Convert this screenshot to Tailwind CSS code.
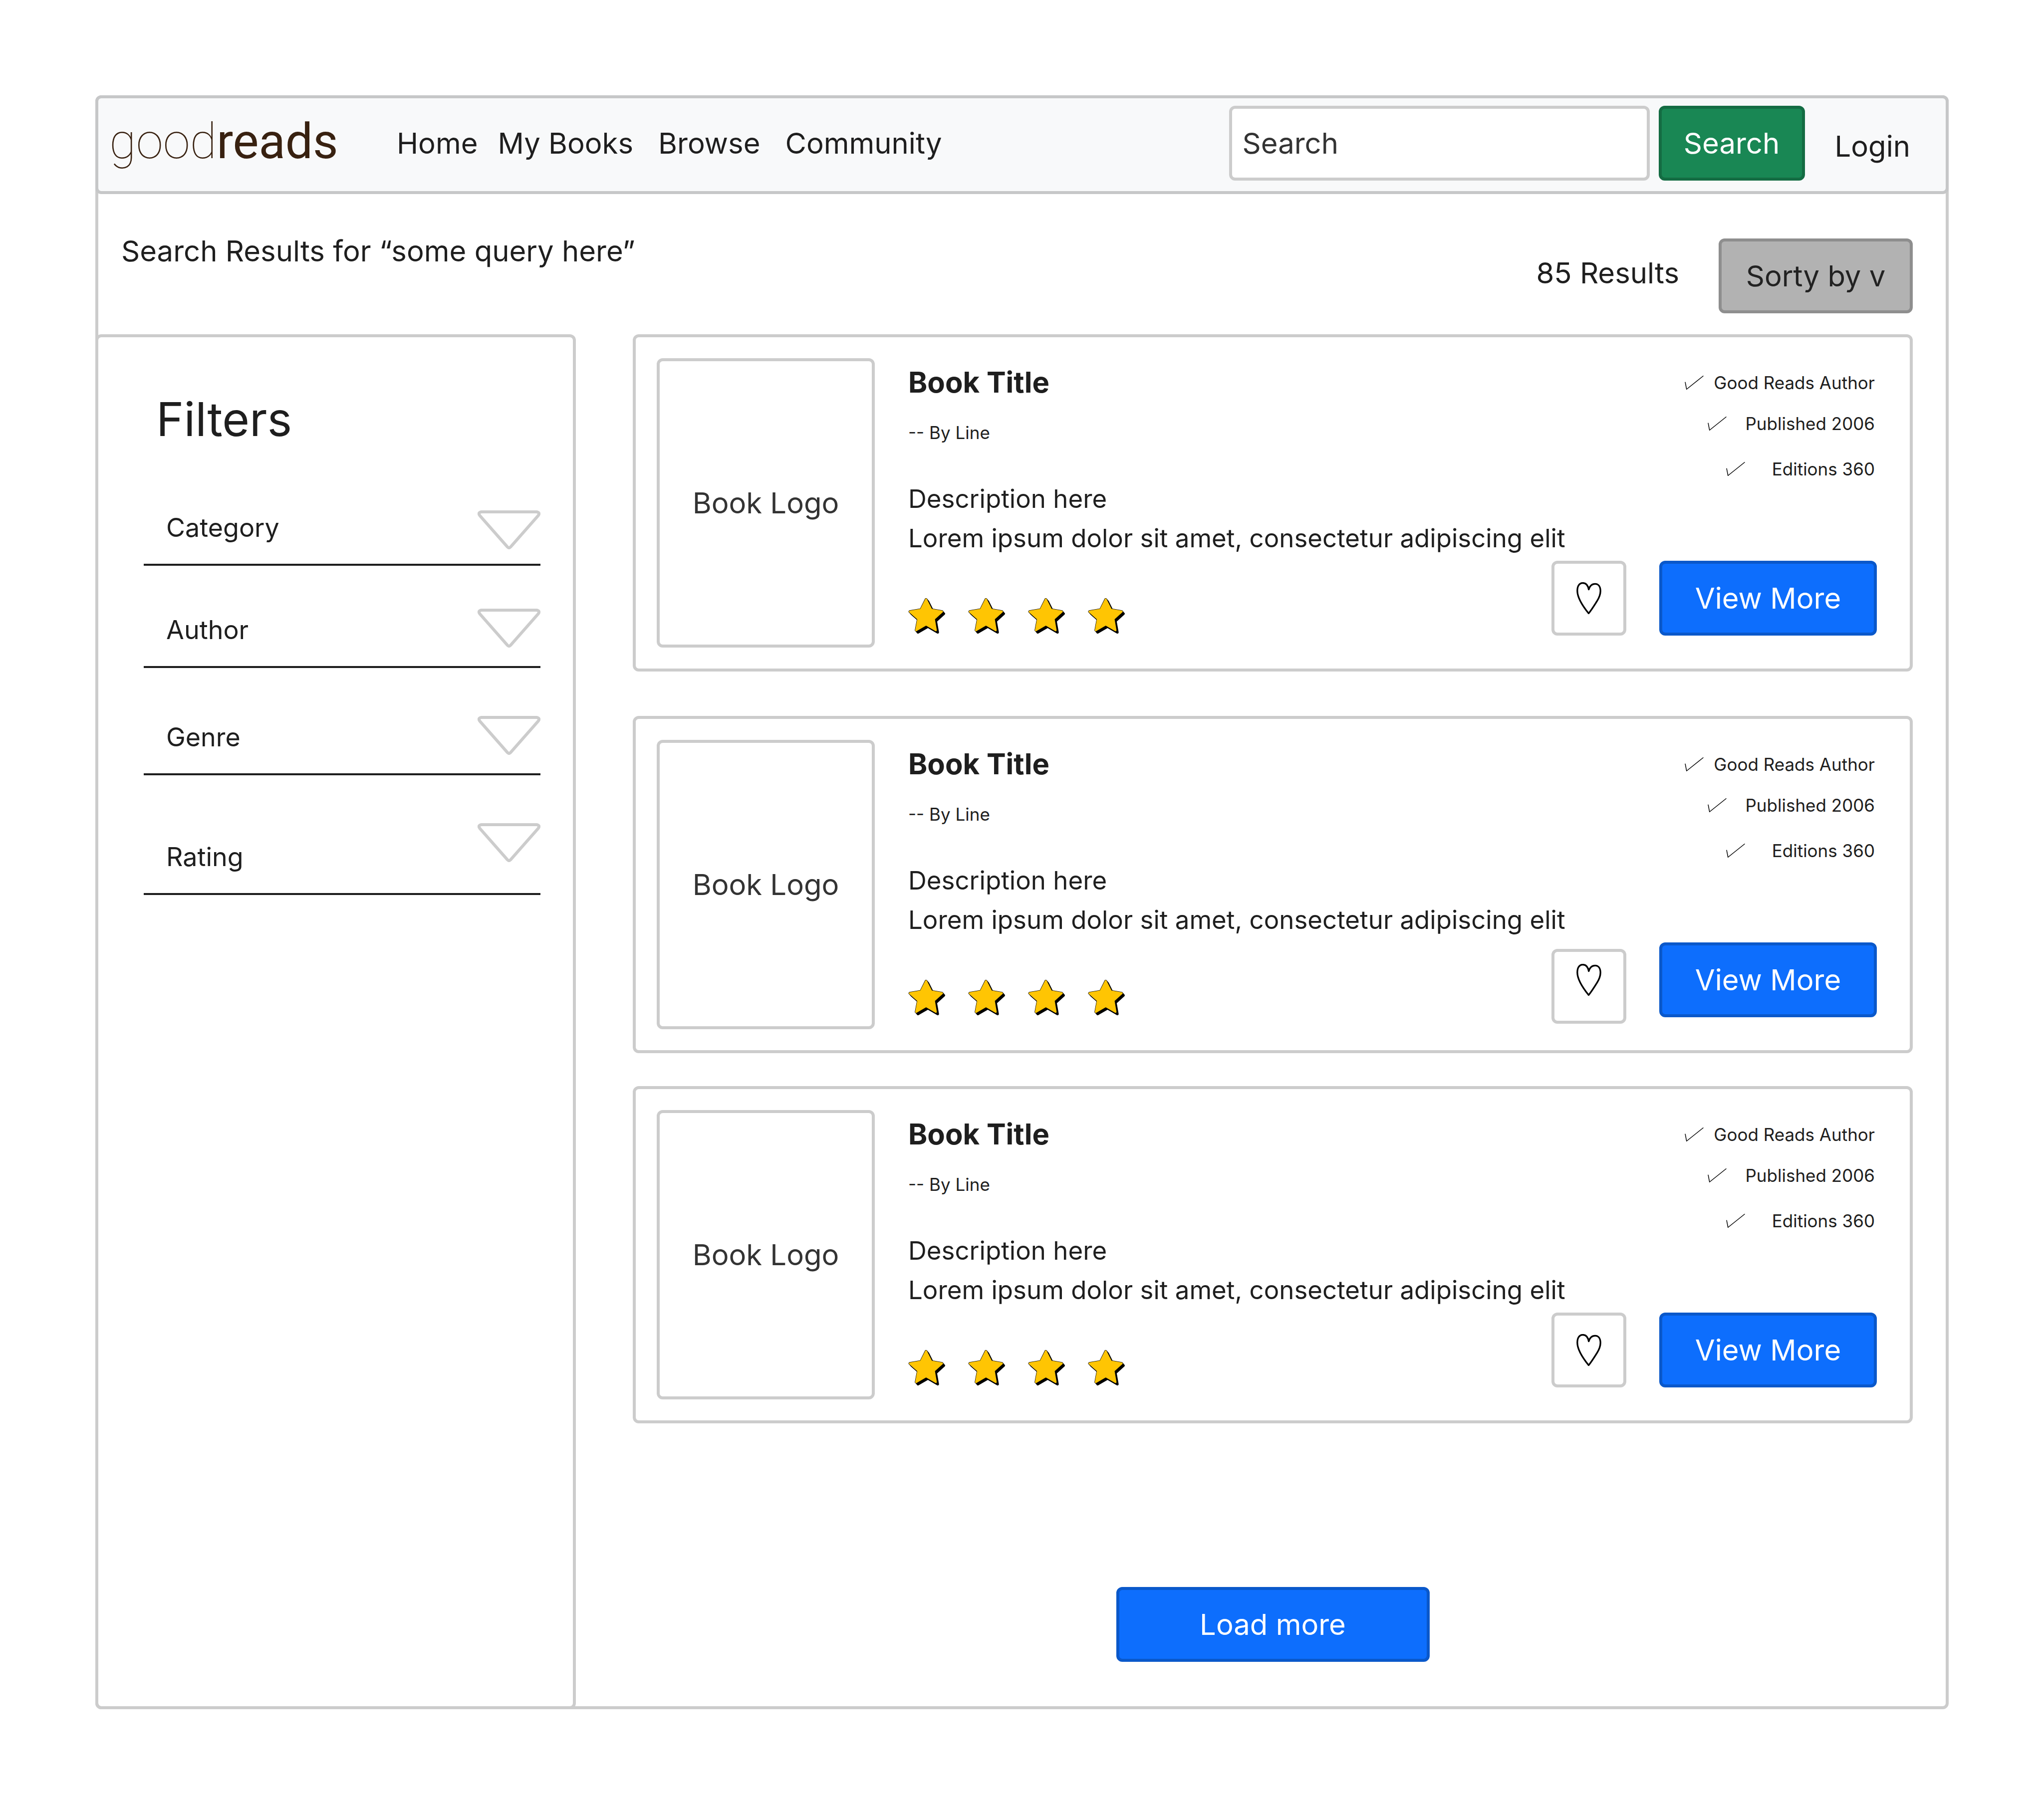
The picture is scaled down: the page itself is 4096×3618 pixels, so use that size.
<!DOCTYPE html>
<html lang="en">
<head>
<meta charset="utf-8">
<title>Goodreads search results</title>
<script src="https://cdn.jsdelivr.net/npm/@tailwindcss/browser@4"></script>
</head>
<body class="bg-white font-['Inter',sans-serif] text-[58px] leading-[73px] text-[#1e1e1e]">

<!-- Shared icons -->
<svg class="hidden" aria-hidden="true">
  <symbol id="star" viewBox="48 42 300 288">
    <g stroke-linejoin="round">
      <path transform="translate(15 17)" fill="#000" stroke="#000" stroke-width="20" d="M191 52L233 136L321 151L255 211L271 303L191 257L110 303L127 211L59 151L149 136Z"/>
      <path transform="translate(8 9)" fill="#000" stroke="#000" stroke-width="20" d="M191 52L233 136L321 151L255 211L271 303L191 257L110 303L127 211L59 151L149 136Z"/>
      <path fill="#000" stroke="#000" stroke-width="21" d="M191 52L233 136L321 151L255 211L271 303L191 257L110 303L127 211L59 151L149 136Z"/>
      <path fill="#ffc503" stroke="#ffc503" stroke-width="15" d="M191 52L233 136L321 151L255 211L271 303L191 257L110 303L127 211L59 151L149 136Z"/>
    </g>
  </symbol>
  <symbol id="check" viewBox="78 53 152 114">
    <path fill="none" stroke="#000" stroke-width="6" stroke-linecap="round" stroke-linejoin="round" d="M81 107L92 164L227 56"/>
  </symbol>
  <symbol id="heart" viewBox="258 260 198 254">
    <path fill="none" stroke="#000" stroke-width="13" stroke-linejoin="round" stroke-linecap="round" d="M355 508C310 452 265 385 265 328C265 288 283 266 309 266C333 266 350 286 356 318C364 290 382 273 406 273C432 273 449 294 449 330C449 358 438 384 421 411C400 444 378 480 355 508Z"/>
  </symbol>
  <symbol id="caret" viewBox="0 0 168 104">
    <path fill="#fff" stroke="#ccc" stroke-width="8" stroke-linejoin="round" d="M10 4H158Q168 6 162 14L88 98Q84 102 80 98L6 14Q0 6 10 4Z"/>
  </symbol>
</svg>

<div class="min-h-screen p-[191px]">
  <div class="rounded-[12px] border-[6px] border-[#ccc] bg-white">

    <header class="-mx-[6px] -mt-[6px] flex items-center rounded-[12px] border-[6px] border-[#c6c7c8] bg-[#f8f9fa] pt-[15px] pr-[71px] pb-[21px] pl-[22px]">
      <a href="#" class="w-[576px] pb-1.5 font-['Roboto',sans-serif] text-[98px] leading-[120px] text-[#382110]"><span class="font-thin">good</span><span>reads</span></a>
      <nav class="flex gap-10">
        <a href="#">Home</a>
        <a href="#">My Books</a>
        <a href="#" class="pl-2.5">Browse</a>
        <a href="#" class="pl-2.5">Community</a>
      </nav>
      <form class="ml-auto flex gap-[18px]">
        <input type="search" aria-label="Search" placeholder="Search" class="h-[150px] w-[843px] rounded-[12px] border-[6px] border-[#ccc] bg-white px-[21px] placeholder:text-[#333]">
        <button type="button" class="h-[150px] w-[293px] rounded-[12px] border-[6px] border-[#146c43] bg-[#198754] text-white">Search</button>
      </form>
      <a href="#" class="ml-[60px] pt-3">Login</a>
    </header>

    <div class="flex items-start justify-between pt-[78px] pr-[66px] pb-[42px] pl-[46px]">
      <h1>Search Results for “some query here”</h1>
      <div class="mt-[11px] flex items-center gap-[79px]">
        <p class="pb-3">85 Results</p>
        <button type="button" class="h-[150px] w-[389px] rounded-[12px] border-[6px] border-[#8e8e8e] bg-[#b2b2b2] text-[#222]">Sorty by v</button>
      </div>
    </div>

    <div class="flex">
      <aside class="-mb-[6px] -ml-[6px] w-[963px] shrink-0 rounded-[12px] border-[6px] border-[#ccc] pt-[106px] pr-[65px] pl-[91px]">
        <h2 class="pl-[25px] text-[94px] leading-[116px]">Filters</h2>
        <div class="mt-[125px] flex flex-col text-[52px] leading-[64px]">
          <button type="button" class="flex h-[111px] justify-between border-b-4 border-[#1e1e1e] pl-[45px]">
            <span class="self-end pb-10">Category</span>
            <svg class="h-[78px] w-[126px]"><use href="#caret"/></svg>
          </button>
          <button type="button" class="mt-[86px] flex h-[119px] justify-between border-b-4 border-[#1e1e1e] pl-[45px]">
            <span class="self-end pb-10">Author</span>
            <svg class="h-[78px] w-[126px]"><use href="#caret"/></svg>
          </button>
          <button type="button" class="mt-24 flex h-[119px] justify-between border-b-4 border-[#1e1e1e] pl-[45px]">
            <span class="self-end pb-10">Genre</span>
            <svg class="h-[78px] w-[126px]"><use href="#caret"/></svg>
          </button>
          <button type="button" class="mt-24 flex h-[144px] justify-between border-b-4 border-[#1e1e1e] pl-[45px]">
            <span class="self-end pb-10">Rating</span>
            <svg class="h-[78px] w-[126px]"><use href="#caret"/></svg>
          </button>
        </div>
      </aside>

      <main class="flex grow flex-col pr-[66px] pb-[89px] pl-[114px]">

        <article class="flex gap-[67px] rounded-[12px] border-[6px] border-[#ccc] py-[42px] pr-[66px] pl-[42px]">
          <div class="flex h-[580px] w-[437px] shrink-0 items-center justify-center rounded-[12px] border-[6px] border-[#ccc] text-[#333]">Book Logo</div>
          <div class="grow">
            <div class="flex justify-between">
              <div class="pt-3">
                <h3 class="font-bold">Book Title</h3>
                <p class="mt-[42px] text-[35px] leading-[44px]">-- By Line</p>
                <p class="mt-[71px] text-[51px] leading-[79px]">Description here<br>Lorem ipsum dolor sit amet, consectetur adipiscing elit</p>
              </div>
              <ul class="flex flex-col items-end pt-[27px] pr-1 text-[35px] leading-[44px]">
                <li class="flex items-center gap-5"><svg class="h-[28px] w-[38px]"><use href="#check"/></svg>Good Reads Author</li>
                <li class="mt-[38px] flex items-center gap-[38px]"><svg class="h-[28px] w-[38px]"><use href="#check"/></svg>Published 2006</li>
                <li class="mt-[47px] flex items-center gap-[54px]"><svg class="h-[28px] w-[38px]"><use href="#check"/></svg>Editions 360</li>
              </ul>
            </div>
            <div class="mt-[6px] flex h-[150px] items-start justify-between">
              <div class="mt-[75px] flex gap-[45px]" role="img" aria-label="4 stars">
                <svg class="h-[71px] w-[75px]"><use href="#star"/></svg>
                <svg class="h-[71px] w-[75px]"><use href="#star"/></svg>
                <svg class="h-[71px] w-[75px]"><use href="#star"/></svg>
                <svg class="h-[71px] w-[75px]"><use href="#star"/></svg>
              </div>
              <div class="flex items-start gap-[66px]">
                <button type="button" aria-label="Add to favorites" class="flex h-[150px] w-[150px] items-center justify-center rounded-[12px] border-[6px] border-[#ccc]"><svg class="h-[64px] w-[50px]"><use href="#heart"/></svg></button>
                <button type="button" class="h-[150px] w-[436px] rounded-[12px] border-[6px] border-[#0a58ca] bg-[#0d6efd] text-white">View More</button>
              </div>
            </div>
          </div>
        </article>

        <article class="mt-[89px] flex gap-[67px] rounded-[12px] border-[6px] border-[#ccc] py-[42px] pr-[66px] pl-[42px]">
          <div class="flex h-[580px] w-[437px] shrink-0 items-center justify-center rounded-[12px] border-[6px] border-[#ccc] text-[#333]">Book Logo</div>
          <div class="grow">
            <div class="flex justify-between">
              <div class="pt-3">
                <h3 class="font-bold">Book Title</h3>
                <p class="mt-[42px] text-[35px] leading-[44px]">-- By Line</p>
                <p class="mt-[71px] text-[51px] leading-[79px]">Description here<br>Lorem ipsum dolor sit amet, consectetur adipiscing elit</p>
              </div>
              <ul class="flex flex-col items-end pt-[27px] pr-1 text-[35px] leading-[44px]">
                <li class="flex items-center gap-5"><svg class="h-[28px] w-[38px]"><use href="#check"/></svg>Good Reads Author</li>
                <li class="mt-[38px] flex items-center gap-[38px]"><svg class="h-[28px] w-[38px]"><use href="#check"/></svg>Published 2006</li>
                <li class="mt-[47px] flex items-center gap-[54px]"><svg class="h-[28px] w-[38px]"><use href="#check"/></svg>Editions 360</li>
              </ul>
            </div>
            <div class="mt-[6px] flex h-[150px] items-start justify-between">
              <div class="mt-[75px] flex gap-[45px]" role="img" aria-label="4 stars">
                <svg class="h-[71px] w-[75px]"><use href="#star"/></svg>
                <svg class="h-[71px] w-[75px]"><use href="#star"/></svg>
                <svg class="h-[71px] w-[75px]"><use href="#star"/></svg>
                <svg class="h-[71px] w-[75px]"><use href="#star"/></svg>
              </div>
              <div class="flex items-start gap-[66px]">
                <button type="button" aria-label="Add to favorites" class="mt-[13px] flex h-[150px] w-[150px] items-center justify-center rounded-[12px] border-[6px] border-[#ccc] pb-[26px]"><svg class="h-[64px] w-[50px]"><use href="#heart"/></svg></button>
                <button type="button" class="h-[150px] w-[436px] rounded-[12px] border-[6px] border-[#0a58ca] bg-[#0d6efd] text-white">View More</button>
              </div>
            </div>
          </div>
        </article>

        <article class="mt-[66px] flex gap-[67px] rounded-[12px] border-[6px] border-[#ccc] py-[42px] pr-[66px] pl-[42px]">
          <div class="flex h-[580px] w-[437px] shrink-0 items-center justify-center rounded-[12px] border-[6px] border-[#ccc] text-[#333]">Book Logo</div>
          <div class="grow">
            <div class="flex justify-between">
              <div class="pt-3">
                <h3 class="font-bold">Book Title</h3>
                <p class="mt-[42px] text-[35px] leading-[44px]">-- By Line</p>
                <p class="mt-[71px] text-[51px] leading-[79px]">Description here<br>Lorem ipsum dolor sit amet, consectetur adipiscing elit</p>
              </div>
              <ul class="flex flex-col items-end pt-[27px] pr-1 text-[35px] leading-[44px]">
                <li class="flex items-center gap-5"><svg class="h-[28px] w-[38px]"><use href="#check"/></svg>Good Reads Author</li>
                <li class="mt-[38px] flex items-center gap-[38px]"><svg class="h-[28px] w-[38px]"><use href="#check"/></svg>Published 2006</li>
                <li class="mt-[47px] flex items-center gap-[54px]"><svg class="h-[28px] w-[38px]"><use href="#check"/></svg>Editions 360</li>
              </ul>
            </div>
            <div class="mt-[6px] flex h-[150px] items-start justify-between">
              <div class="mt-[75px] flex gap-[45px]" role="img" aria-label="4 stars">
                <svg class="h-[71px] w-[75px]"><use href="#star"/></svg>
                <svg class="h-[71px] w-[75px]"><use href="#star"/></svg>
                <svg class="h-[71px] w-[75px]"><use href="#star"/></svg>
                <svg class="h-[71px] w-[75px]"><use href="#star"/></svg>
              </div>
              <div class="flex items-start gap-[66px]">
                <button type="button" aria-label="Add to favorites" class="flex h-[150px] w-[150px] items-center justify-center rounded-[12px] border-[6px] border-[#ccc]"><svg class="h-[64px] w-[50px]"><use href="#heart"/></svg></button>
                <button type="button" class="h-[150px] w-[436px] rounded-[12px] border-[6px] border-[#0a58ca] bg-[#0d6efd] text-white">View More</button>
              </div>
            </div>
          </div>
        </article>

        <button type="button" class="mt-[328px] h-[150px] w-[628px] self-center rounded-[12px] border-[6px] border-[#0a58ca] bg-[#0d6efd] text-white">Load more</button>
      </main>
    </div>
  </div>
</div>
</body>
</html>
